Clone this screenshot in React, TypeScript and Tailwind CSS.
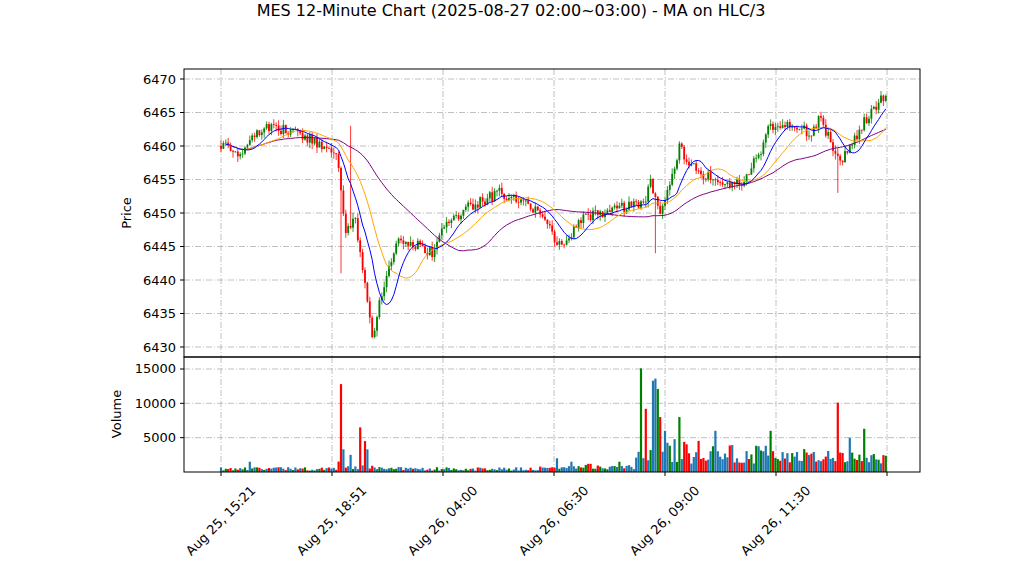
import React from "react";

function rng(seed: number) {
  let s = seed;
  return () => {
    s = (s * 1664525 + 1013904223) % 4294967296;
    return s / 4294967296;
  };
}
const wp: [number, number][] = [
  [221, 6460],[240, 6459],[265, 6463],[300, 6462],[320, 6460],[335, 6459],[340, 6455],[345, 6447],[355, 6449],[365, 6440],[372, 6431],[380, 6437],[390, 6443],[400, 6446],[420, 6445],[432, 6444],[445, 6448],[470, 6451],[500, 6453],[520, 6452],[540, 6450],[555, 6446],[565, 6445],[580, 6449],[600, 6450],[630, 6451],[645, 6452],[650, 6455],[660, 6449],[670, 6455],[680, 6460],[690, 6457],[700, 6456],[720, 6455],[740, 6454],[760, 6459],[770, 6463],[790, 6463],[810, 6462],[820, 6464],[830, 6461],[840, 6457],[850, 6460],[870, 6465],[887, 6468],
];
function interp(x: number) {
  for (let i = 0; i < wp.length - 1; i++) {
    if (x <= wp[i + 1][0]) {
      const t = (x - wp[i][0]) / (wp[i + 1][0] - wp[i][0]);
      return wp[i][1] + t * (wp[i + 1][1] - wp[i][1]);
    }
  }
  return wp[wp.length - 1][1];
}
const py = (p: number) => 79 + (6470 - p) * 6.7;
const vy = (v: number) => 472 - v * 0.006867;

const r = rng(7);
const step = 2.4;
const N = Math.floor((887 - 221) / step) + 1;
type C = { x: number; o: number; h: number; l: number; c: number; v: number; vc: string };
const candles: C[] = [];
let prev = 6460;
const spikes: [number, number, string][] = [
  [340, 12800, "#ff0000"],[343, 3300, "#1f77b4"],[350, 2500, "#1f77b4"],[360, 6500, "#ff0000"],[364, 4500, "#ff0000"],[367, 3300, "#1f77b4"],[642, 15100, "#008000"],[645, 9200, "#ff0000"],[652, 13300, "#1f77b4"],[655, 13600, "#1f77b4"],[658, 12100, "#008000"],[660, 8000, "#ff0000"],[838, 10100, "#ff0000"],[770, 6000, "#008000"],[864, 6300, "#008000"],[850, 5000, "#1f77b4"],[665, 6000, "#1f77b4"],[680, 8000, "#008000"],[715, 6000, "#1f77b4"],[558, 2000, "#1f77b4"],[572, 1500, "#1f77b4"],[620, 1500, "#008000"],[250, 1500, "#1f77b4"],
];
for (let i = 0; i < N; i++) {
  const x = 221 + i * step;
  const o = prev;
  const c = interp(x) + (r() - 0.5) * 1.6;
  let h = Math.max(o, c) + r() * 0.9;
  let l = Math.min(o, c) - r() * 0.9;
  if (Math.abs(x - 340) < 1.3) l = 6441;
  if (Math.abs(x - 655) < 1.3) l = 6444;
  if (Math.abs(x - 838) < 1.3) l = 6453;
  if (Math.abs(x - 350) < 1.3) h = 6463;
  let v: number;
  if (x < 338) v = 200 + r() * 500;
  else if (x < 400) v = 400 + r() * 1500 * Math.max(0.3, (400 - x) / 60);
  else if (x < 635) v = 200 + r() * 500 + (x > 540 ? r() * 600 : 0);
  else v = 1200 + r() * 4000 * (1 - (x - 635) / 400);
  let vc = r() < 0.5 ? "#1f77b4" : c >= o ? "#008000" : "#ff0000";
  for (const s of spikes) if (Math.abs(x - s[0]) < 1.2) { v = s[1]; vc = s[2]; }
  candles.push({ x, o, h, l, c, v, vc });
  prev = c;
}
const hlc = candles.map((k) => (k.h + k.l + k.c) / 3);
function ma(n: number) {
  return hlc.map((_, i) => {
    const a = hlc.slice(Math.max(0, i - n + 1), i + 1);
    return a.reduce((s, v) => s + v, 0) / a.length;
  });
}
const line = (arr: number[], start: number) =>
  arr.map((v, i) => (i >= start ? `${candles[i].x},${py(v)}` : "")).filter(Boolean).join(" ");

const xt = [221, 332, 443, 554, 665, 776, 887];
const xl = ["Aug 25, 15:21", "Aug 25, 18:51", "Aug 26, 04:00", "Aug 26, 06:30", "Aug 26, 09:00", "Aug 26, 11:30", ""];
const pt = [6470, 6465, 6460, 6455, 6450, 6445, 6440, 6435, 6430];
const vt = [5000, 10000, 15000];
const grid = "#b0b0b0";

export default function App() {
  return (
    <div className="w-[1022px] h-[575px] bg-white relative" style={{ fontFamily: "'DejaVu Sans', sans-serif" }}>
      <svg width={1022} height={575} className="block">
        <text x={511} y={16} textAnchor="middle" fontSize={16} fill="#000">MES 12-Minute Chart (2025-08-27 02:00~03:00) - MA on HLC/3</text>
        {xt.map((x) => (
          <g key={x}>
            <line x1={x} x2={x} y1={69} y2={357} stroke={grid} strokeDasharray="6 2 1 2" strokeWidth={0.8} />
            <line x1={x} x2={x} y1={357} y2={472} stroke={grid} strokeDasharray="6 2 1 2" strokeWidth={0.8} />
          </g>
        ))}
        {pt.map((p) => (
          <g key={p}>
            <line x1={184} x2={920} y1={py(p)} y2={py(p)} stroke={grid} strokeDasharray="6 2 1 2" strokeWidth={0.8} />
            <line x1={180} x2={184} y1={py(p)} y2={py(p)} stroke="#000" />
            <text x={176} y={py(p) + 4.5} textAnchor="end" fontSize={13}>{p}</text>
          </g>
        ))}
        {vt.map((v) => (
          <g key={v}>
            <line x1={184} x2={920} y1={vy(v)} y2={vy(v)} stroke={grid} strokeDasharray="6 2 1 2" strokeWidth={0.8} />
            <line x1={180} x2={184} y1={vy(v)} y2={vy(v)} stroke="#000" />
            <text x={176} y={vy(v) + 4.5} textAnchor="end" fontSize={13}>{v}</text>
          </g>
        ))}
        {candles.map((k, i) => {
          const col = k.c >= k.o ? "#008000" : "#ff0000";
          const top = py(Math.max(k.o, k.c));
          const hgt = Math.max(0.8, Math.abs(py(k.o) - py(k.c)));
          return (
            <g key={i}>
              <line x1={k.x} x2={k.x} y1={py(k.h)} y2={py(k.l)} stroke={col} strokeWidth={0.8} />
              <rect x={k.x - 0.9} y={top} width={1.8} height={hgt} fill={col} />
              <rect x={k.x - 1.1} y={vy(k.v)} width={2.2} height={472 - vy(k.v)} fill={k.vc} />
            </g>
          );
        })}
        <polyline points={line(ma(50), 5)} fill="none" stroke="#800080" strokeWidth={1} />
        <polyline points={line(ma(20), 3)} fill="none" stroke="#ffa500" strokeWidth={1} />
        <polyline points={line(ma(10), 2)} fill="none" stroke="#0000ff" strokeWidth={1} />
        <rect x={184} y={69} width={736} height={288} fill="none" stroke="#000" />
        <rect x={184} y={357} width={736} height={115} fill="none" stroke="#000" />
        {xt.map((x, i) => (
          <g key={"l" + x}>
            <line x1={x} x2={x} y1={472} y2={476} stroke="#000" />
            <text x={x} y={525} textAnchor="middle" fontSize={13} transform={`rotate(-45 ${x} 521)`}>{xl[i]}</text>
          </g>
        ))}
        <text x={131} y={213} textAnchor="middle" fontSize={13} transform="rotate(-90 131 213)">Price</text>
        <text x={121} y={414} textAnchor="middle" fontSize={13} transform="rotate(-90 121 414)">Volume</text>
      </svg>
    </div>
  );
}
